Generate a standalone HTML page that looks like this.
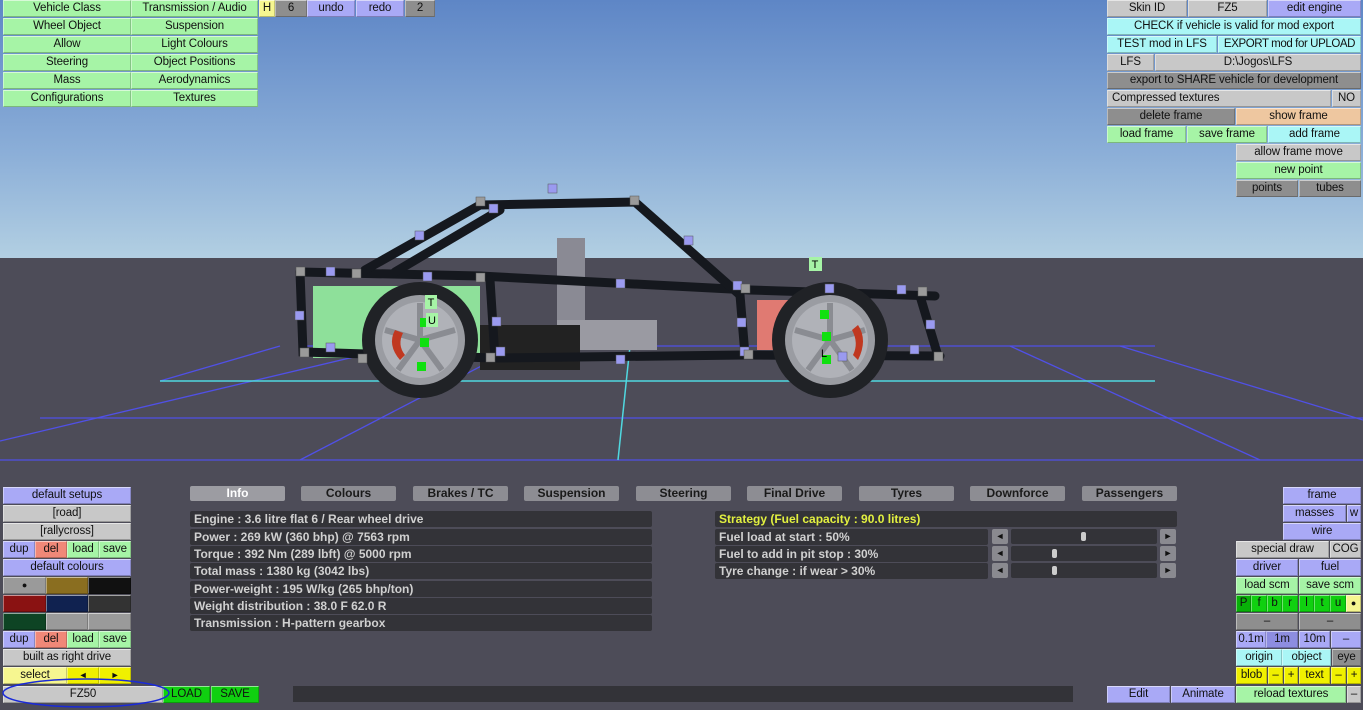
<!DOCTYPE html>
<html><head><meta charset="utf-8"><style>
body{margin:0;width:1363px;height:710px;overflow:hidden;position:relative;font-family:"Liberation Sans",sans-serif;background:#4d4c58}
.sky{position:absolute;left:0;top:0;width:1363px;height:258px;background:linear-gradient(#5e86c6,#8cafd8 60%,#b2cfe2)}
.b{position:absolute;height:17px;line-height:15px;text-align:center;font-size:11.5px;letter-spacing:-0.1px;color:#111;box-sizing:border-box;border-top:1px solid rgba(255,255,255,.55);border-left:1px solid rgba(255,255,255,.4);border-bottom:1px solid rgba(0,0,0,.25);border-right:1px solid rgba(0,0,0,.2);white-space:nowrap;overflow:hidden}
.g{background:#a6f4a6}.l{background:#a9a9f6}.c{background:#aaf6f6}.y{background:#f6f690}.Y{background:#f0f000}.s{background:#c8c8c8}.d{background:#8e8e8e}.p{background:#eec7a0}.r{background:#f08878}.G{background:#10d010}
.t{position:absolute;height:15px;line-height:15px;text-align:center;font-size:12px;font-weight:bold;color:#1a1a1a;background:#8d8d93;border-radius:2px}
.row{position:absolute;height:16px;line-height:16px;font-size:12px;font-weight:bold;color:#d0d0d0;background:#333338;padding-left:4px;box-sizing:border-box;border-radius:2px}
.ar{position:absolute;width:16px;height:15px;background:#8a8a90;border-radius:2px;font-size:9px;line-height:15px;text-align:center;color:#111}
.sl{position:absolute;height:15px;background:#333338;border-radius:2px}
.kn{position:absolute;width:5px;height:9px;top:3px;background:#ccc;border-radius:2px}
</style></head><body>
<div class="sky"></div>
<svg style="position:absolute;left:0;top:0" width="1363" height="710">
<g stroke="#5050e6" stroke-width="1.3" fill="none">
<line x1="0" y1="460" x2="1363" y2="460"/>
<line x1="40" y1="418" x2="1363" y2="418"/>
<line x1="300" y1="346" x2="1155" y2="346"/>
<line x1="0" y1="441" x2="400" y2="346"/>
<line x1="300" y1="460" x2="520" y2="346"/>
<line x1="1010" y1="346" x2="1260" y2="460"/>
<line x1="1120" y1="346" x2="1363" y2="420"/>
<line x1="160" y1="381" x2="280" y2="346"/>
</g>
<line x1="160" y1="381" x2="1155" y2="381" stroke="#50d8e0" stroke-width="1.5"/>
<line x1="630" y1="346" x2="618" y2="460" stroke="#50d8e0" stroke-width="1.5"/>
<rect x="313" y="286" width="167" height="72" fill="#8ee09a"/>
<rect x="757" y="300" width="45" height="50" fill="#e07a72"/>
<rect x="557" y="238" width="28" height="112" fill="#8a8a94"/>
<rect x="557" y="320" width="100" height="30" fill="#9a9aa2"/>
<rect x="480" y="325" width="100" height="45" fill="#222"/>
<g stroke="#15181e" stroke-width="9" stroke-linecap="round" fill="none">
<polyline points="300,272 480,276 750,290 935,296"/>
<polyline points="365,270 480,205 635,202 740,295"/>
<polyline points="395,272 500,210"/>
<polyline points="300,272 303,352 495,358 745,355 940,356"/>
<line x1="490" y1="280" x2="495" y2="358"/>
<line x1="740" y1="295" x2="745" y2="355"/>
<polyline points="920,296 938,356"/>
</g>
<g>
<circle cx="420" cy="340" r="58" fill="#202226"/><circle cx="420" cy="340" r="45" fill="#9a9ca2"/><circle cx="420" cy="340" r="38" fill="#b0b2b8"/>
<circle cx="830" cy="340" r="58" fill="#202226"/><circle cx="830" cy="340" r="45" fill="#9a9ca2"/><circle cx="830" cy="340" r="38" fill="#b0b2b8"/>
<g stroke="#8a8c92" stroke-width="6"><line x1="420" y1="340" x2="420" y2="303"/><line x1="420" y1="340" x2="455" y2="330"/><line x1="420" y1="340" x2="442" y2="370"/><line x1="420" y1="340" x2="398" y2="370"/><line x1="420" y1="340" x2="385" y2="330"/>
<line x1="830" y1="340" x2="830" y2="303"/><line x1="830" y1="340" x2="865" y2="330"/><line x1="830" y1="340" x2="852" y2="370"/><line x1="830" y1="340" x2="808" y2="370"/><line x1="830" y1="340" x2="795" y2="330"/></g>
<path d="M395 330 q-8 15 5 30 l5-5 q-8-10-2-22z" fill="#c03820"/>
<path d="M858 325 q10 15 0 35 l-5-5 q6-12-1-25z" fill="#c03820"/>
</g>
<g fill="#9a9af0" stroke="#555" stroke-width=".5">
<rect x="548" y="184" width="9" height="9"/><rect x="415" y="231" width="9" height="9"/><rect x="684" y="236" width="9" height="9"/>
<rect x="326" y="267" width="9" height="9"/><rect x="423" y="272" width="9" height="9"/><rect x="616" y="279" width="9" height="9"/>
<rect x="733" y="281" width="9" height="9"/><rect x="825" y="284" width="9" height="9"/><rect x="897" y="285" width="9" height="9"/>
<rect x="295" y="311" width="9" height="9"/><rect x="492" y="317" width="9" height="9"/><rect x="737" y="318" width="9" height="9"/>
<rect x="926" y="320" width="9" height="9"/><rect x="326" y="343" width="9" height="9"/><rect x="496" y="347" width="9" height="9"/>
<rect x="616" y="355" width="9" height="9"/><rect x="740" y="347" width="9" height="9"/><rect x="838" y="352" width="9" height="9"/>
<rect x="910" y="345" width="9" height="9"/><rect x="489" y="204" width="9" height="9"/>
</g>
<g fill="#9a9a9a" stroke="#555" stroke-width=".5">
<rect x="476" y="197" width="9" height="9"/><rect x="630" y="196" width="9" height="9"/><rect x="296" y="267" width="9" height="9"/>
<rect x="352" y="269" width="9" height="9"/><rect x="476" y="273" width="9" height="9"/><rect x="918" y="287" width="9" height="9"/>
<rect x="300" y="348" width="9" height="9"/><rect x="358" y="354" width="9" height="9"/><rect x="486" y="353" width="9" height="9"/>
<rect x="744" y="350" width="9" height="9"/><rect x="934" y="352" width="9" height="9"/><rect x="741" y="284" width="9" height="9"/>
</g>
<g fill="#10e010"><rect x="420" y="318" width="9" height="9"/><rect x="420" y="338" width="9" height="9"/><rect x="417" y="362" width="9" height="9"/><rect x="820" y="310" width="9" height="9"/><rect x="822" y="332" width="9" height="9"/><rect x="822" y="355" width="9" height="9"/></g>
<g font-size="11" font-family="Liberation Sans" text-anchor="middle"><rect x="809" y="257" width="13" height="14" fill="#a6f4a6"/><text x="815" y="268">T</text>
<rect x="425" y="295" width="12" height="14" fill="#a6f4a6"/><text x="431" y="306">T</text><rect x="426" y="313" width="12" height="14" fill="#a6f4a6"/><text x="432" y="324">U</text><text x="824" y="357">L</text></g>
</svg>
<!-- top left -->
<div class="b g" style="left:3px;top:0;width:128px">Vehicle Class</div><div class="b g" style="left:131px;top:0;width:127px">Transmission / Audio</div>
<div class="b g" style="left:3px;top:18px;width:128px">Wheel Object</div><div class="b g" style="left:131px;top:18px;width:127px">Suspension</div>
<div class="b g" style="left:3px;top:36px;width:128px">Allow</div><div class="b g" style="left:131px;top:36px;width:127px">Light Colours</div>
<div class="b g" style="left:3px;top:54px;width:128px">Steering</div><div class="b g" style="left:131px;top:54px;width:127px">Object Positions</div>
<div class="b g" style="left:3px;top:72px;width:128px">Mass</div><div class="b g" style="left:131px;top:72px;width:127px">Aerodynamics</div>
<div class="b g" style="left:3px;top:90px;width:128px">Configurations</div><div class="b g" style="left:131px;top:90px;width:127px">Textures</div>
<div class="b y" style="left:259px;top:0;width:16px">H</div><div class="b d" style="left:275px;top:0;width:32px">6</div>
<div class="b l" style="left:307px;top:0;width:48px">undo</div><div class="b l" style="left:356px;top:0;width:48px">redo</div><div class="b d" style="left:405px;top:0;width:30px">2</div>
<!-- top right -->
<div class="b s" style="left:1107px;top:0;width:80px">Skin ID</div><div class="b s" style="left:1188px;top:0;width:79px">FZ5</div><div class="b l" style="left:1268px;top:0;width:93px">edit engine</div>
<div class="b c" style="left:1107px;top:18px;width:254px">CHECK if vehicle is valid for mod export</div>
<div class="b c" style="left:1107px;top:36px;width:110px">TEST mod in LFS</div><div class="b c" style="left:1218px;top:36px;width:143px;letter-spacing:-0.4px">EXPORT mod for UPLOAD</div>
<div class="b s" style="left:1107px;top:54px;width:47px">LFS</div><div class="b s" style="left:1155px;top:54px;width:206px">D:\Jogos\LFS</div>
<div class="b d" style="left:1107px;top:72px;width:254px">export to SHARE vehicle for development</div>
<div class="b s" style="left:1107px;top:90px;width:224px;text-align:left;padding-left:4px">Compressed textures</div><div class="b s" style="left:1332px;top:90px;width:29px">NO</div>
<div class="b d" style="left:1107px;top:108px;width:128px">delete frame</div><div class="b p" style="left:1236px;top:108px;width:125px">show frame</div>
<div class="b g" style="left:1107px;top:126px;width:79px">load frame</div><div class="b g" style="left:1187px;top:126px;width:80px">save frame</div><div class="b c" style="left:1268px;top:126px;width:93px">add frame</div>
<div class="b s" style="left:1236px;top:144px;width:125px">allow frame move</div>
<div class="b g" style="left:1236px;top:162px;width:125px">new point</div>
<div class="b d" style="left:1236px;top:180px;width:62px">points</div><div class="b d" style="left:1299px;top:180px;width:62px">tubes</div>
<!-- bottom left -->
<div class="b l" style="left:3px;top:487px;width:128px">default setups</div>
<div class="b s" style="left:3px;top:505px;width:128px">[road]</div>
<div class="b s" style="left:3px;top:523px;width:128px">[rallycross]</div>
<div class="b l" style="left:3px;top:541px;width:32px">dup</div><div class="b r" style="left:35px;top:541px;width:32px">del</div><div class="b g" style="left:67px;top:541px;width:32px">load</div><div class="b g" style="left:99px;top:541px;width:32px">save</div>
<div class="b l" style="left:3px;top:559px;width:128px">default colours</div>
<div class="b" style="left:3px;top:577px;width:43px;background:#9a9a9a;font-size:9px">●</div><div class="b" style="left:46px;top:577px;width:42px;background:#8a6e20"></div><div class="b" style="left:88px;top:577px;width:43px;background:#111"></div>
<div class="b" style="left:3px;top:595px;width:43px;background:#8a1212"></div><div class="b" style="left:46px;top:595px;width:42px;background:#102250"></div><div class="b" style="left:88px;top:595px;width:43px;background:#333"></div>
<div class="b" style="left:3px;top:613px;width:43px;background:#0e4424"></div><div class="b" style="left:46px;top:613px;width:42px;background:#9a9a9a"></div><div class="b" style="left:88px;top:613px;width:43px;background:#9a9a9a"></div>
<div class="b l" style="left:3px;top:631px;width:32px">dup</div><div class="b r" style="left:35px;top:631px;width:32px">del</div><div class="b g" style="left:67px;top:631px;width:32px">load</div><div class="b g" style="left:99px;top:631px;width:32px">save</div>
<div class="b s" style="left:3px;top:649px;width:128px">built as right drive</div>
<div class="b y" style="left:3px;top:667px;width:64px">select</div><div class="b Y" style="left:67px;top:667px;width:32px;font-size:9px">◄</div><div class="b Y" style="left:99px;top:667px;width:32px;font-size:9px">►</div>
<div class="b s" style="left:3px;top:686px;width:160px">FZ50</div>
<div class="b G" style="left:163px;top:686px;width:47px">LOAD</div><div class="b G" style="left:211px;top:686px;width:48px">SAVE</div>
<div style="position:absolute;left:293px;top:686px;width:780px;height:16px;background:#333338"></div>
<svg style="position:absolute;left:0;top:674px" width="180" height="36"><ellipse cx="86" cy="19" rx="83" ry="14" fill="none" stroke="#1a2ad8" stroke-width="1.5"/></svg>
<!-- tabs -->
<div class="t" style="left:190px;top:486px;width:95px;background:#9c9ca2;color:#fff">Info</div>
<div class="t" style="left:301px;top:486px;width:95px">Colours</div>
<div class="t" style="left:413px;top:486px;width:95px">Brakes / TC</div>
<div class="t" style="left:524px;top:486px;width:95px">Suspension</div>
<div class="t" style="left:636px;top:486px;width:95px">Steering</div>
<div class="t" style="left:747px;top:486px;width:95px">Final Drive</div>
<div class="t" style="left:859px;top:486px;width:95px">Tyres</div>
<div class="t" style="left:970px;top:486px;width:95px">Downforce</div>
<div class="t" style="left:1082px;top:486px;width:95px">Passengers</div>
<div class="row" style="left:190px;top:511px;width:462px">Engine : 3.6 litre flat 6 / Rear wheel drive</div>
<div class="row" style="left:190px;top:529px;width:462px">Power : 269 kW (360 bhp) @ 7563 rpm</div>
<div class="row" style="left:190px;top:546px;width:462px">Torque : 392 Nm (289 lbft) @ 5000 rpm</div>
<div class="row" style="left:190px;top:563px;width:462px">Total mass : 1380 kg (3042 lbs)</div>
<div class="row" style="left:190px;top:581px;width:462px">Power-weight : 195 W/kg (265 bhp/ton)</div>
<div class="row" style="left:190px;top:598px;width:462px">Weight distribution : 38.0 F  62.0 R</div>
<div class="row" style="left:190px;top:615px;width:462px">Transmission : H-pattern gearbox</div>
<div class="row" style="left:715px;top:511px;width:462px;color:#e2f040">Strategy (Fuel capacity : 90.0 litres)</div>
<div class="row" style="left:715px;top:529px;width:273px">Fuel load at start : 50%</div>
<div class="row" style="left:715px;top:546px;width:273px">Fuel to add in pit stop : 30%</div>
<div class="row" style="left:715px;top:563px;width:273px">Tyre change : if wear &gt; 30%</div>
<div class="ar" style="left:992px;top:529px">◄</div><div class="sl" style="left:1011px;top:529px;width:146px"><div class="kn" style="left:70px"></div></div><div class="ar" style="left:1160px;top:529px">►</div>
<div class="ar" style="left:992px;top:546px">◄</div><div class="sl" style="left:1011px;top:546px;width:146px"><div class="kn" style="left:41px"></div></div><div class="ar" style="left:1160px;top:546px">►</div>
<div class="ar" style="left:992px;top:563px">◄</div><div class="sl" style="left:1011px;top:563px;width:146px"><div class="kn" style="left:41px"></div></div><div class="ar" style="left:1160px;top:563px">►</div>
<!-- bottom right -->
<div class="b l" style="left:1283px;top:487px;width:78px">frame</div>
<div class="b l" style="left:1283px;top:505px;width:63px">masses</div><div class="b l" style="left:1347px;top:505px;width:14px">w</div>
<div class="b l" style="left:1283px;top:523px;width:78px">wire</div>
<div class="b s" style="left:1236px;top:541px;width:93px">special draw</div><div class="b s" style="left:1330px;top:541px;width:31px">COG</div>
<div class="b l" style="left:1236px;top:559px;width:62px">driver</div><div class="b l" style="left:1299px;top:559px;width:62px">fuel</div>
<div class="b g" style="left:1236px;top:577px;width:62px">load scm</div><div class="b g" style="left:1299px;top:577px;width:62px">save scm</div>
<div class="b G" style="left:1236px;top:595px;width:15px;background:#08b008">P</div><div class="b G" style="left:1251px;top:595px;width:16px">f</div><div class="b G" style="left:1267px;top:595px;width:15px">b</div><div class="b G" style="left:1282px;top:595px;width:16px">r</div><div class="b G" style="left:1299px;top:595px;width:15px">l</div><div class="b G" style="left:1314px;top:595px;width:16px">t</div><div class="b G" style="left:1330px;top:595px;width:16px">u</div><div class="b y" style="left:1346px;top:595px;width:15px;font-size:9px">●</div>
<div class="b d" style="left:1236px;top:613px;width:62px">–</div><div class="b d" style="left:1299px;top:613px;width:62px">–</div>
<div class="b l" style="left:1236px;top:631px;width:30px">0.1m</div><div class="b l" style="left:1266px;top:631px;width:32px;background:#8d8de0">1m</div><div class="b l" style="left:1299px;top:631px;width:31px">10m</div><div class="b l" style="left:1331px;top:631px;width:30px">–</div>
<div class="b c" style="left:1236px;top:649px;width:46px">origin</div><div class="b c" style="left:1282px;top:649px;width:49px">object</div><div class="b d" style="left:1332px;top:649px;width:29px">eye</div>
<div class="b Y" style="left:1236px;top:667px;width:31px">blob</div><div class="b Y" style="left:1268px;top:667px;width:15px">–</div><div class="b Y" style="left:1284px;top:667px;width:14px">+</div><div class="b Y" style="left:1299px;top:667px;width:31px">text</div><div class="b Y" style="left:1331px;top:667px;width:15px">–</div><div class="b Y" style="left:1347px;top:667px;width:14px">+</div>
<div class="b l" style="left:1107px;top:686px;width:63px">Edit</div><div class="b l" style="left:1171px;top:686px;width:64px">Animate</div>
<div class="b g" style="left:1236px;top:686px;width:110px">reload textures</div><div class="b s" style="left:1347px;top:686px;width:14px">–</div>
</body></html>
